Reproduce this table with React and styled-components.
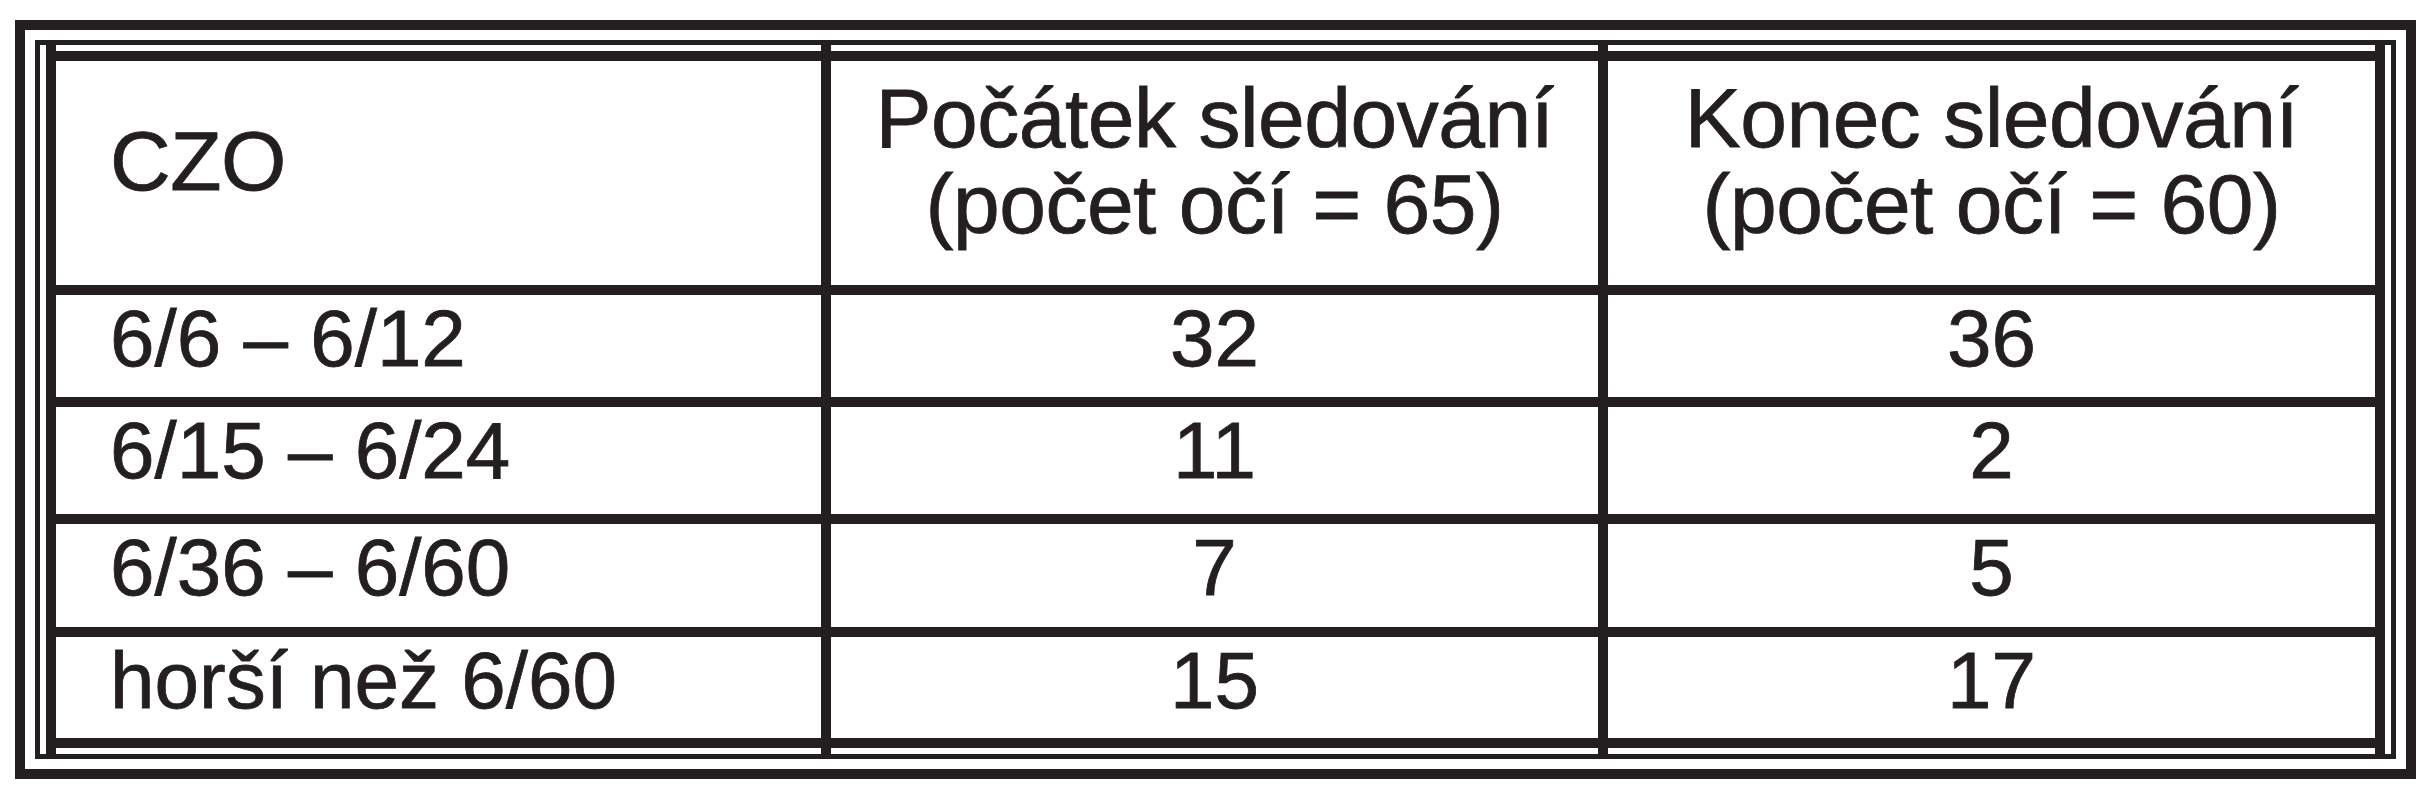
import React from 'react'
import styled, { createGlobalStyle } from 'styled-components'

const GlobalStyle = createGlobalStyle`
    html, body {
        margin: 0;
        padding: 0;
        background: #ffffff;
    }
    body {
        font-family: "Liberation Sans", Arial, Helvetica, sans-serif;
        color: #231f20;
    }
`

const Page = styled.div`
    width: 2431px;
    height: 800px;
    padding: 20px 0 0 15px;
    box-sizing: border-box;
`

const OuterFrame = styled.div`
    width: 2401px;
    height: 759px;
    box-sizing: border-box;
    border: 10px solid #231f20;
    padding: 10px;
`

const InnerFrame = styled.div`
    height: 100%;
    box-sizing: border-box;
    border: 5px solid #231f20;
    padding: 0 5px 0 6px;
    display: flex;
`

const Column = styled.div`
    width: ${props => props.w}px;
    display: flex;
    flex-direction: column;
    padding: 6px 0;
    border-right: 10px solid #231f20;
    border-left: ${props => props.first ? '10px solid #231f20' : 'none'};
`

const HeadCell = styled.div`
    box-sizing: border-box;
    height: 234px;
    border-top: 10px solid #231f20;
    padding: 14px 0 38px ${props => props.left ? '54px' : '0'};
    display: flex;
    align-items: center;
    justify-content: ${props => props.left ? 'flex-start' : 'center'};
    text-align: center;
    font-size: 84px;
    line-height: 86px;
    letter-spacing: -0.5px;
    -webkit-text-stroke: 0.8px #231f20;
`

const BodyCell = styled.div`
    box-sizing: border-box;
    height: ${props => props.h + (props.last ? 20 : 10)}px;
    border-top: 10px solid #231f20;
    border-bottom: ${props => props.last ? '10px solid #231f20' : 'none'};
    padding: 4px 0 0 ${props => props.left ? '54px' : '0'};
    text-align: ${props => props.left ? 'left' : 'center'};
    font-size: 80px;
    line-height: 80px;
    white-space: nowrap;
    -webkit-text-stroke: 0.8px #231f20;
`

const rowHeights = [102, 107, 103, 101]

const columns = [
    {
        w: 765,
        left: true,
        head: ['CZO'],
        cells: ['6/6 – 6/12', '6/15 – 6/24', '6/36 – 6/60', 'horší než 6/60']
    },
    {
        w: 767,
        head: ['Počátek sledování', '(počet očí = 65)'],
        cells: ['32', '11', '7', '15']
    },
    {
        w: 767,
        head: ['Konec sledování', '(počet očí = 60)'],
        cells: ['36', '2', '5', '17']
    }
]

const App = () => {
    return (
        <Page>
            <GlobalStyle />
            <OuterFrame>
                <InnerFrame>
                    {columns.map((col, i) => (
                        <Column key={i} w={col.w} first={i === 0}>
                            <HeadCell left={col.left}>
                                <div>
                                    {col.head.map((line, j) => (
                                        <div key={j}>{line}</div>
                                    ))}
                                </div>
                            </HeadCell>
                            {col.cells.map((cell, j) => (
                                <BodyCell
                                    key={j}
                                    left={col.left}
                                    h={rowHeights[j]}
                                    last={j === col.cells.length - 1}
                                >
                                    {cell}
                                </BodyCell>
                            ))}
                        </Column>
                    ))}
                </InnerFrame>
            </OuterFrame>
        </Page>
    )
}

export default App
